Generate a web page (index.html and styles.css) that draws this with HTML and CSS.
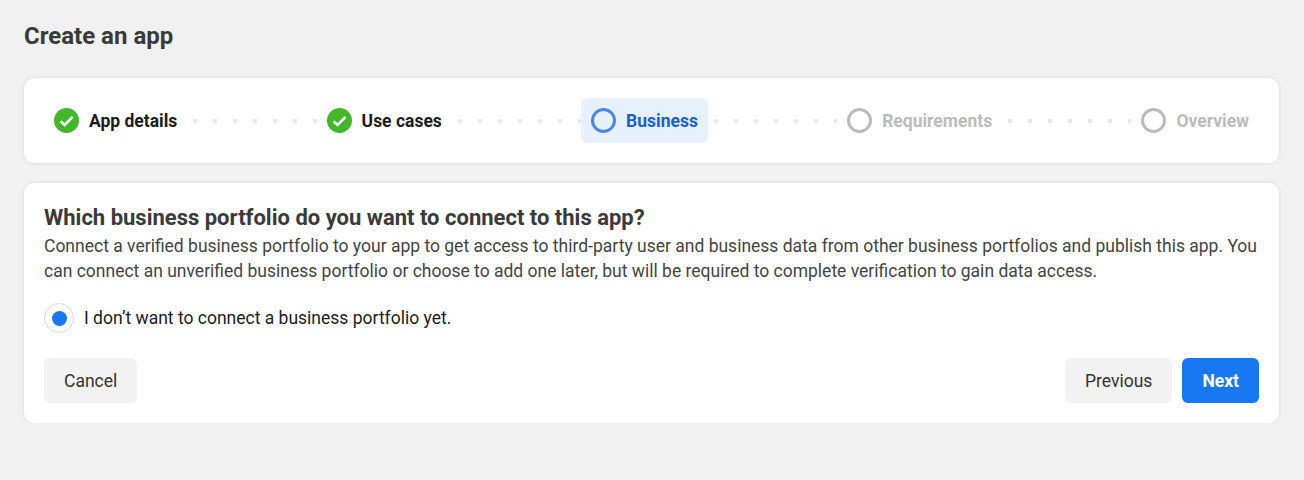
FILE: index.html
```html
<!DOCTYPE html>
<html lang="en">
<head>
<meta charset="UTF-8">
<meta name="viewport" content="width=device-width, initial-scale=1.0">
<title>Create an app</title>
<link rel="stylesheet" href="styles.css">
</head>
<body>
<div class="page">
  <h1 class="page-title">Create an app</h1>

  <!-- Stepper -->
  <div class="card stepper">
    <div class="step step-done">
      <svg class="step-icon" viewBox="0 0 25 25"><circle cx="12.5" cy="12.5" r="12.5" fill="#42b72a"/><path d="M6.6 13.2l4 3.8L18.6 8.8" fill="none" stroke="#fff" stroke-width="2.6"/></svg>
      <span>App details</span>
    </div>
    <div class="step-line"></div>
    <div class="step step-done">
      <svg class="step-icon" viewBox="0 0 25 25"><circle cx="12.5" cy="12.5" r="12.5" fill="#42b72a"/><path d="M6.6 13.2l4 3.8L18.6 8.8" fill="none" stroke="#fff" stroke-width="2.6"/></svg>
      <span>Use cases</span>
    </div>
    <div class="step-line"></div>
    <div class="step step-active">
      <span class="step-ring"></span>
      <span>Business</span>
    </div>
    <div class="step-line"></div>
    <div class="step step-todo">
      <span class="step-ring"></span>
      <span>Requirements</span>
    </div>
    <div class="step-line"></div>
    <div class="step step-todo">
      <span class="step-ring"></span>
      <span>Overview</span>
    </div>
  </div>

  <!-- Business portfolio -->
  <div class="card panel">
    <h2 class="panel-title">Which business portfolio do you want to connect to this app?</h2>
    <p class="panel-text">Connect a verified business portfolio to your app to get access to third-party user and business data from other business portfolios and publish this app. You can connect an unverified business portfolio or choose to add one later, but will be required to complete verification to gain data access.</p>
    <div class="radio-row">
      <span class="radio"><span class="radio-dot"></span></span>
      <span>I don’t want to connect a business portfolio yet.</span>
    </div>
    <div class="actions">
      <button class="button">Cancel</button>
      <div class="actions-right">
        <button class="button">Previous</button>
        <button class="button button-primary">Next</button>
      </div>
    </div>
  </div>
</div>
</body>
</html>
```
FILE: styles.css
```css
/* General styles */
body {
  font-family: Roboto, "Liberation Sans", sans-serif;
  margin: 0;
  padding: 0;
  background-color: #f1f1f1;
  color: #1c1c1c;
}

.page {
  padding: 21px 25px 0 24px;
}

.page-title {
  margin: 0 0 27px;
  font-size: 24px;
  line-height: 30px;
  font-weight: 700;
  color: #3a3a3a;
}

.card {
  background-color: #fff;
  border-radius: 10px;
  box-shadow: 0 0 4px rgba(0, 0, 0, 0.1);
}

/* Stepper */
.stepper {
  display: flex;
  align-items: center;
  padding: 20px;
  margin-bottom: 20px;
}

.step {
  display: flex;
  align-items: center;
  gap: 10px;
  height: 45px;
  padding: 0 10px;
  border-radius: 6px;
  font-size: 17.5px;
  font-weight: 700;
  white-space: nowrap;
}

.step-icon {
  width: 25px;
  height: 25px;
}

.step-ring {
  box-sizing: border-box;
  width: 25px;
  height: 25px;
  border: 3px solid #bbb;
  border-radius: 50%;
}

.step-line {
  flex: 1;
  height: 4px;
  background-image: linear-gradient(to right, #e9e9e9 4px, transparent 4px);
  background-size: 20px 4px;
  background-position: 6px 0;
  background-repeat: repeat-x;
}

.step-active {
  background-color: #e7f0fd;
  color: #1a5fd0;
}

.step-active .step-ring {
  border-color: #4a86e8;
}

.step-todo {
  color: #bbb;
}

/* Panel */
.panel {
  padding: 20px;
}

.panel-title {
  margin: 0;
  font-size: 22px;
  line-height: 30px;
  font-weight: 700;
  color: #3a3a3a;
}

.panel-text {
  margin: 0 0 19px;
  padding-top: 1px;
  font-size: 17.5px;
  line-height: 25px;
  color: #444;
}

.radio-row {
  display: flex;
  align-items: center;
  gap: 10px;
  height: 30px;
  font-size: 17.5px;
  margin-bottom: 25px;
}

.radio {
  box-sizing: border-box;
  display: flex;
  align-items: center;
  justify-content: center;
  width: 30px;
  height: 30px;
  border: 1px solid #dadada;
  border-radius: 50%;
}

.radio-dot {
  width: 15px;
  height: 15px;
  border-radius: 50%;
  background-color: #1877f2;
}

.actions {
  display: flex;
  justify-content: space-between;
}

.actions-right {
  display: flex;
  gap: 10px;
}

.button {
  height: 45px;
  padding: 0 20px;
  border: none;
  border-radius: 6px;
  background-color: #f2f2f2;
  color: #333;
  font-family: inherit;
  font-size: 17.5px;
}

.button-primary {
  background-color: #1877f2;
  color: #fff;
  font-weight: 700;
}
```
